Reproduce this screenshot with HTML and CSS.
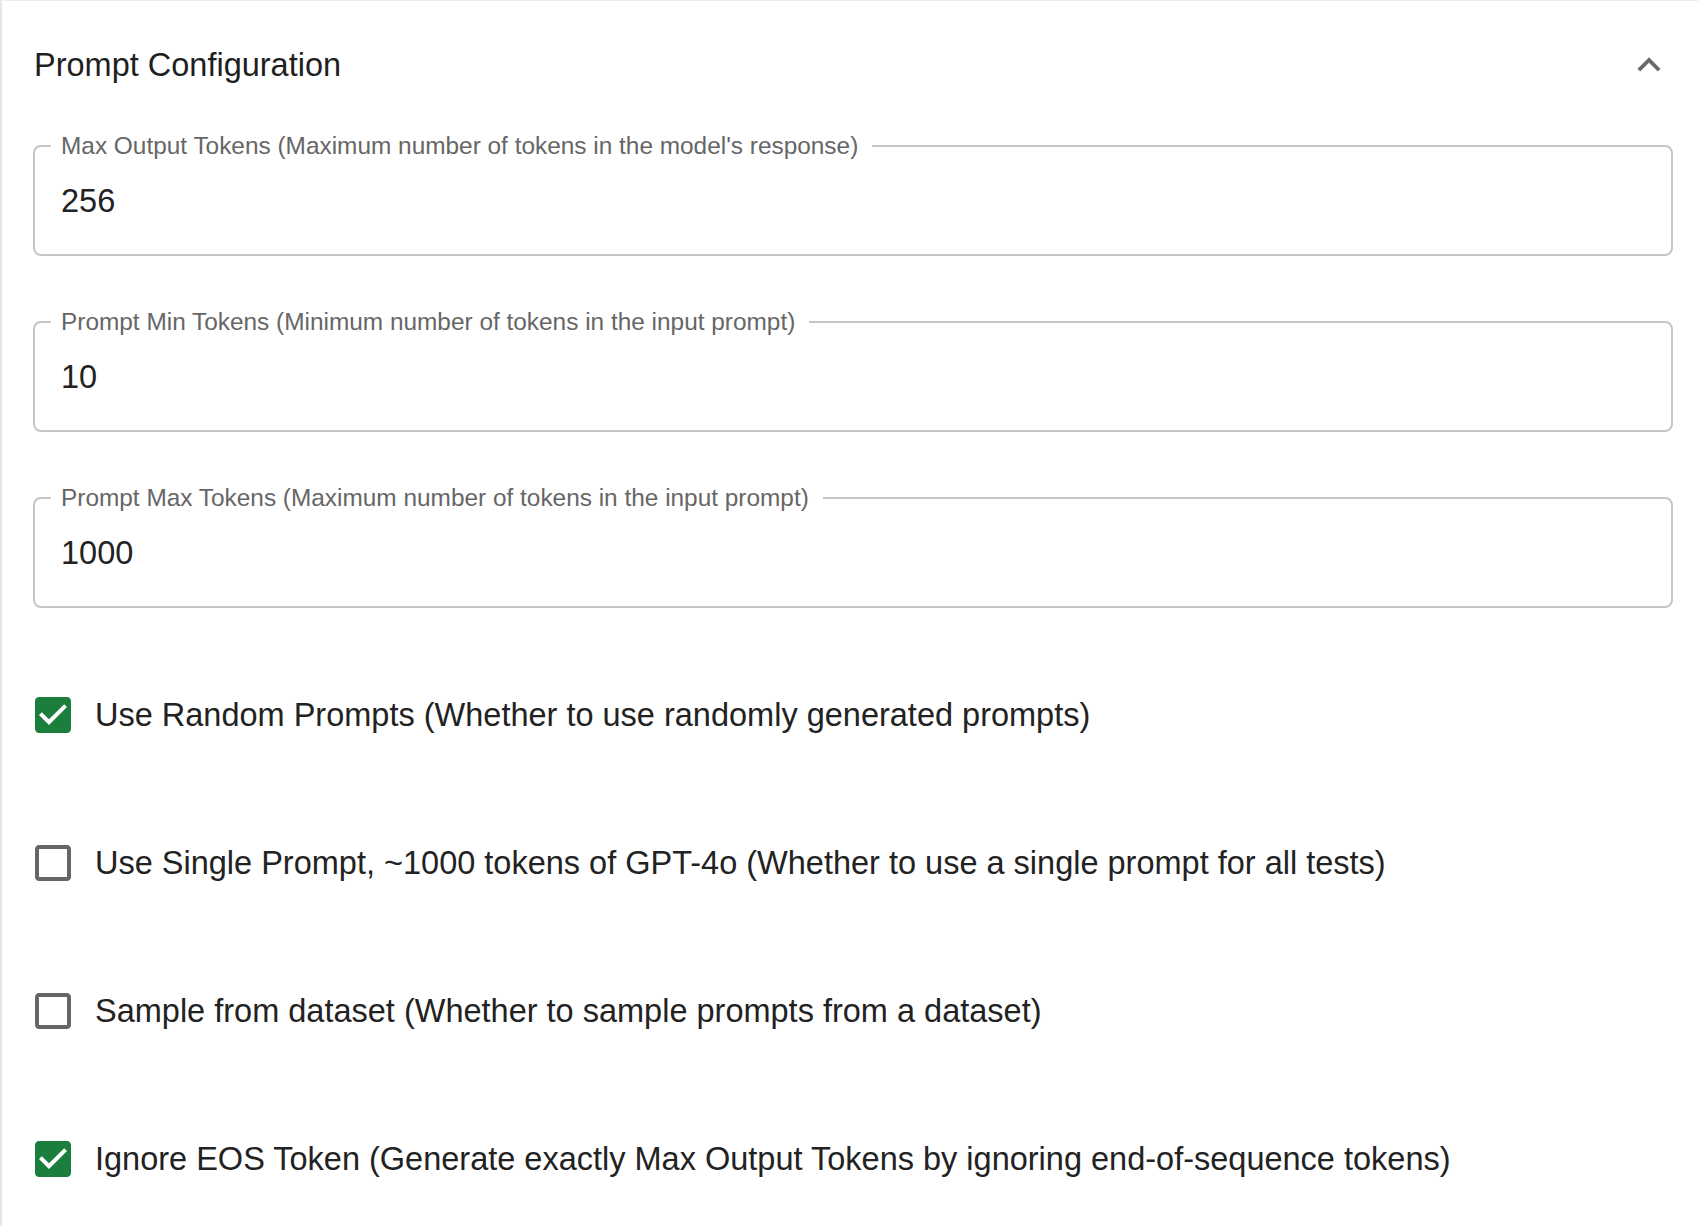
FILE: index.html
```html
<!DOCTYPE html>
<html lang="en">
<head>
<meta charset="utf-8">
<title>Prompt Configuration</title>
<link rel="stylesheet" href="styles.css">
</head>
<body>
<section class="card">
  <header class="card-header">
    <h2 class="card-title">Prompt Configuration</h2>
    <svg class="chevron" viewBox="0 0 24 24" aria-hidden="true"><path d="m12 8-6 6 1.41 1.41L12 10.83l4.59 4.58L18 14z"/></svg>
  </header>

  <div class="fields">
    <fieldset class="field">
      <legend class="field-label">Max Output Tokens (Maximum number of tokens in the model's response)</legend>
      <div class="field-value">256</div>
    </fieldset>
    <fieldset class="field">
      <legend class="field-label">Prompt Min Tokens (Minimum number of tokens in the input prompt)</legend>
      <div class="field-value">10</div>
    </fieldset>
    <fieldset class="field">
      <legend class="field-label">Prompt Max Tokens (Maximum number of tokens in the input prompt)</legend>
      <div class="field-value">1000</div>
    </fieldset>
  </div>

  <div class="checks">
    <label class="check-row">
      <svg class="box checked" viewBox="0 0 24 24"><path d="M19 3H5c-1.11 0-2 .9-2 2v14c0 1.1.89 2 2 2h14c1.11 0 2-.9 2-2V5c0-1.1-.89-2-2-2zm-9 14l-5-5 1.41-1.41L10 14.17l7.59-7.59L19 8l-9 9z"/></svg>
      <span class="check-text">Use Random Prompts (Whether to use randomly generated prompts)</span>
    </label>
    <label class="check-row">
      <svg class="box" viewBox="0 0 24 24"><path d="M19 5v14H5V5h14m0-2H5c-1.1 0-2 .9-2 2v14c0 1.1.9 2 2 2h14c1.1 0 2-.9 2-2V5c0-1.1-.9-2-2-2z"/></svg>
      <span class="check-text">Use Single Prompt, ~1000 tokens of GPT-4o (Whether to use a single prompt for all tests)</span>
    </label>
    <label class="check-row">
      <svg class="box" viewBox="0 0 24 24"><path d="M19 5v14H5V5h14m0-2H5c-1.1 0-2 .9-2 2v14c0 1.1.9 2 2 2h14c1.1 0 2-.9 2-2V5c0-1.1-.9-2-2-2z"/></svg>
      <span class="check-text">Sample from dataset (Whether to sample prompts from a dataset)</span>
    </label>
    <label class="check-row">
      <svg class="box checked" viewBox="0 0 24 24"><path d="M19 3H5c-1.11 0-2 .9-2 2v14c0 1.1.89 2 2 2h14c1.11 0 2-.9 2-2V5c0-1.1-.89-2-2-2zm-9 14l-5-5 1.41-1.41L10 14.17l7.59-7.59L19 8l-9 9z"/></svg>
      <span class="check-text">Ignore EOS Token (Generate exactly Max Output Tokens by ignoring end-of-sequence tokens)</span>
    </label>
  </div>
</section>
</body>
</html>
```

FILE: styles.css
```css
html, body {
  margin: 0;
  padding: 0;
  background: #ffffff;
  overflow: hidden;
}

body {
  font-family: "Liberation Sans", Arial, Helvetica, sans-serif;
  color: rgba(0, 0, 0, 0.87);
}

.card {
  box-sizing: border-box;
  width: 1698px;
  min-height: 1226px;
  border-top: 1px solid #ededed;
  border-left: 2px solid #e6e6e6;
  padding: 0 25px 0 31px;
}

.card-header {
  height: 127px;
  display: flex;
  align-items: center;
  justify-content: space-between;
}

.card-title {
  margin: 0 0 0 1px;
  font-size: 32.5px;
  font-weight: 400;
  line-height: 40px;
  color: #1f1f1f;
}

.chevron {
  width: 46px;
  height: 46px;
  fill: #6b6b6b;
  margin-right: 1px;
  margin-top: 0;
}

.fields {
  margin-top: 6px;
  display: flex;
  flex-direction: column;
  gap: 54px;
}

.field {
  margin: 0;
  padding: 25px 26px 35px 26px;
  border: 2px solid #c6c6c6;
  border-radius: 8px;
  min-width: 0;
}

.field-label {
  margin-left: -10px;
  padding: 0 14px 0 10px;
  font-size: 24.4px;
  line-height: 24px;
  color: #666666;
}

.field-value {
  font-size: 32.5px;
  line-height: 36px;
  color: #222222;
}

.checks {
  margin-top: 33px;
  display: flex;
  flex-direction: column;
}

.check-row {
  height: 148px;
  display: flex;
  align-items: center;
  gap: 18px;
  margin-left: -4px;
}

.box {
  width: 48px;
  height: 48px;
  flex: none;
  fill: #666666;
}

.box.checked {
  fill: #1b7e3c;
}

.check-text {
  font-size: 32.5px;
  line-height: 40px;
  color: #222222;
}
```
